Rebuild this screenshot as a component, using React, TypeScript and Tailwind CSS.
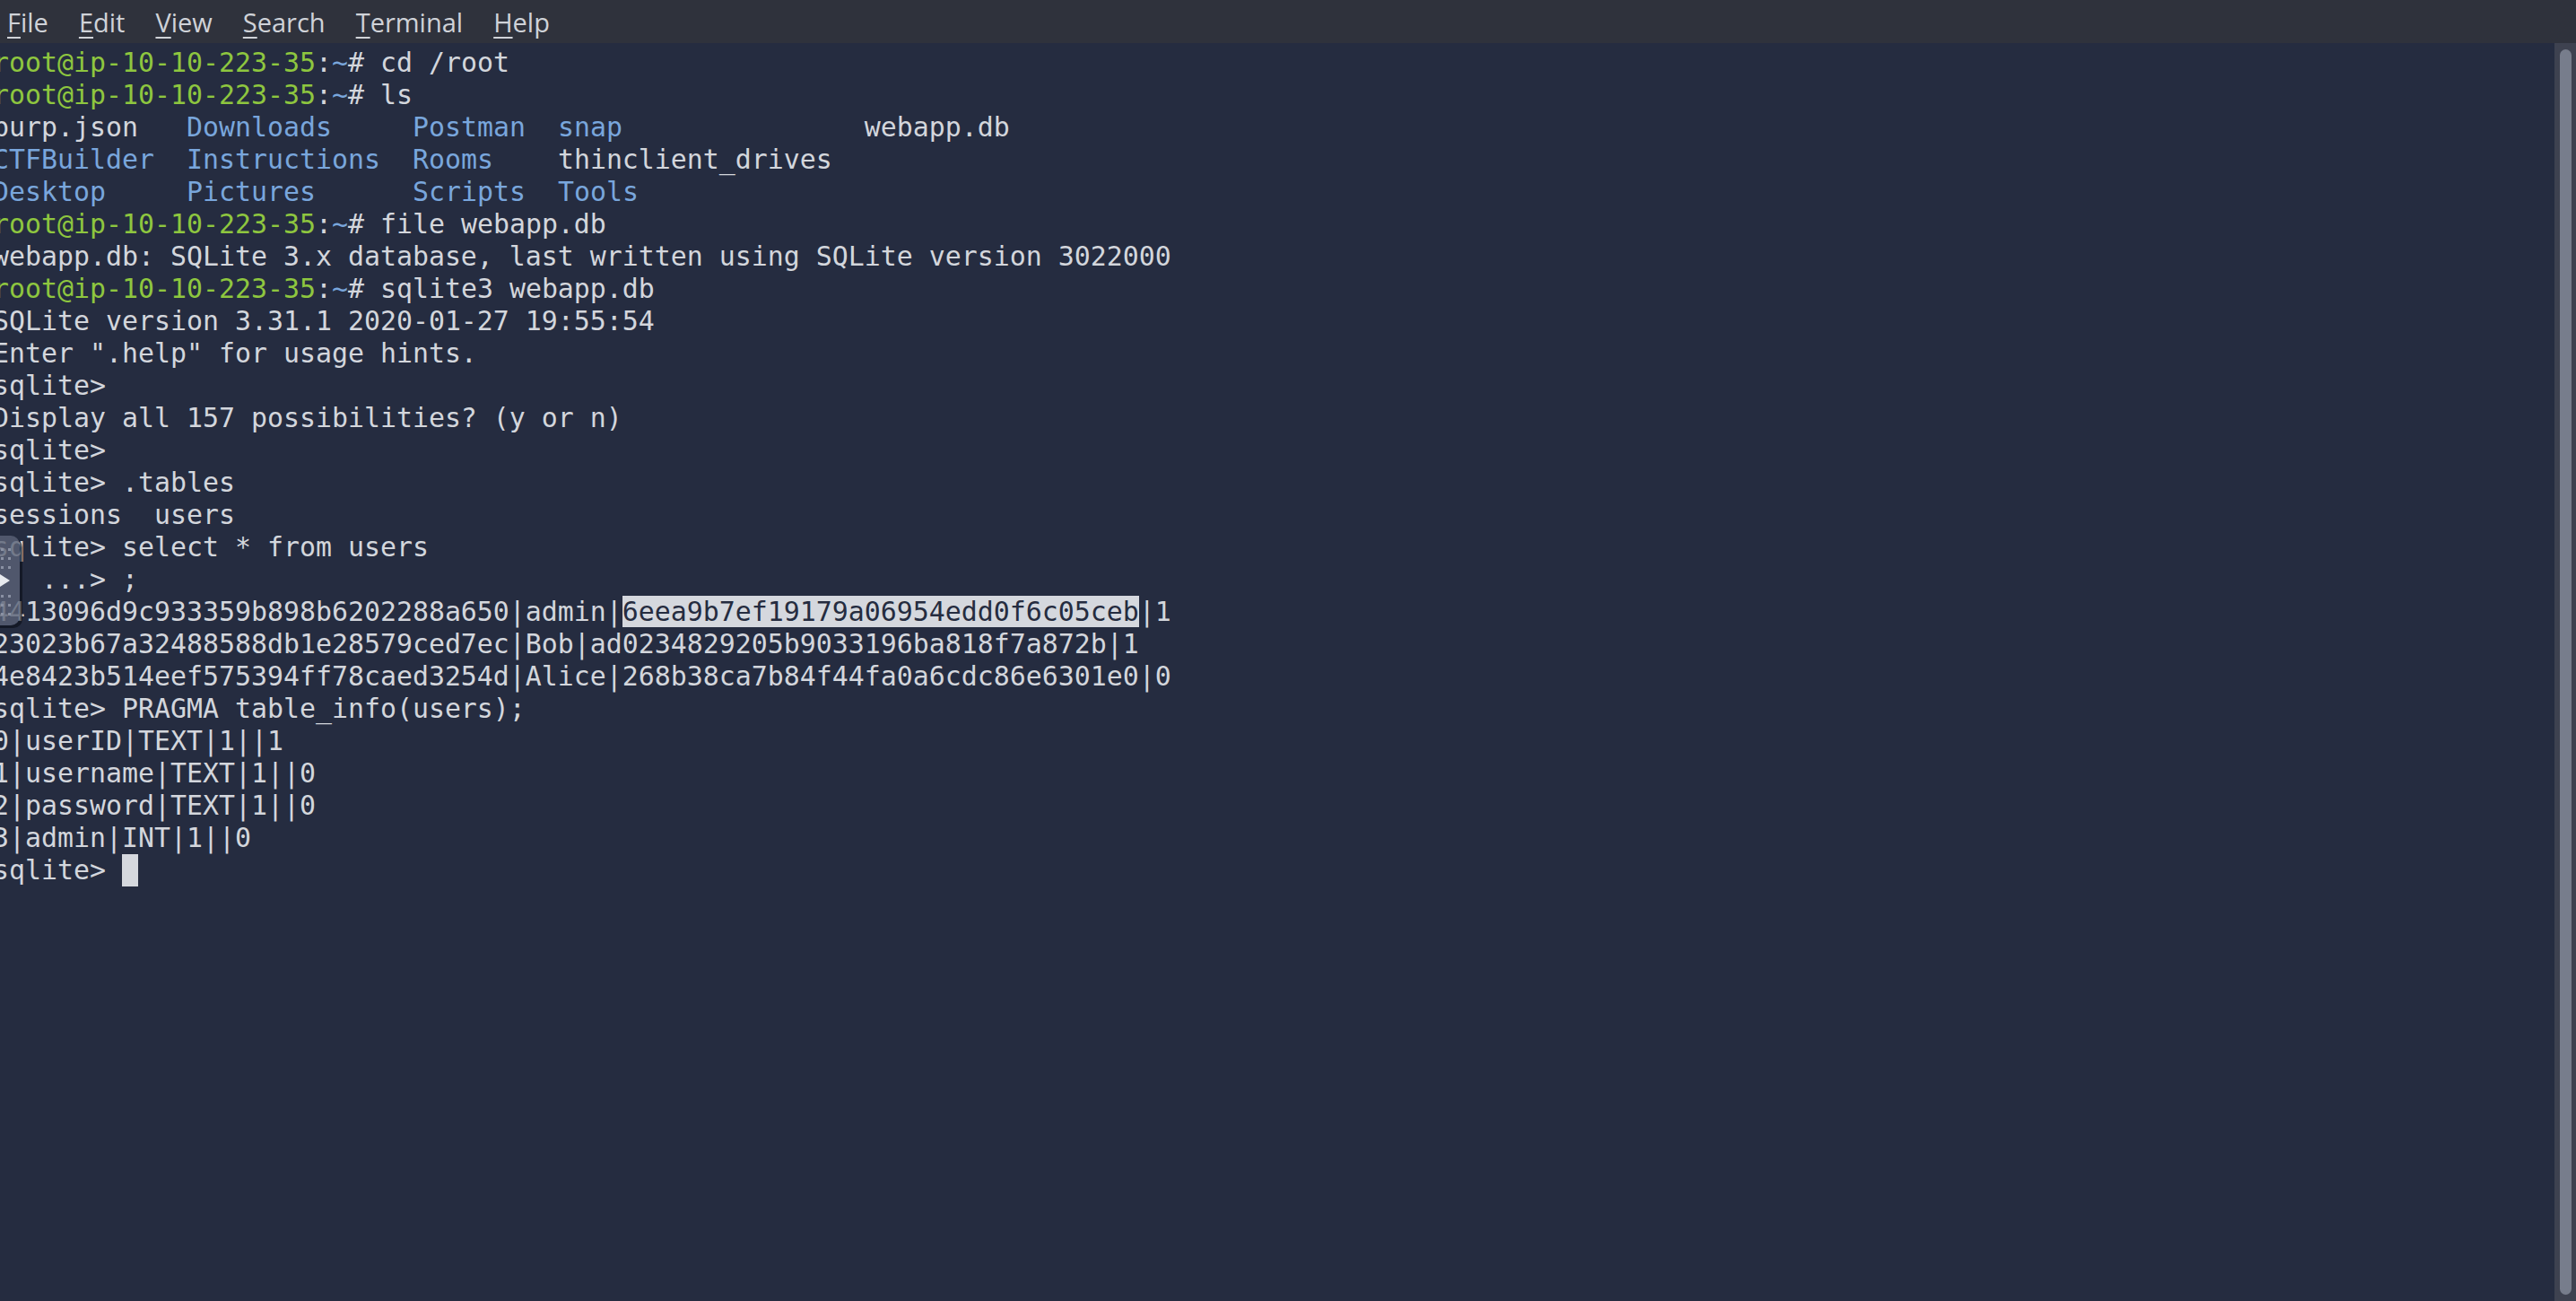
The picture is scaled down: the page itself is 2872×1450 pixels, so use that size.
import { FC, ReactNode } from "react";

const G = "text-[#8ec63f]";
const B = "text-[#79a6dc]";

const Prompt: FC<{ cmd: string }> = ({ cmd }) => (
  <>
    <span className={G}>root@ip-10-10-223-35</span>
    <span>:</span>
    <span className={B}>~</span>
    <span># {cmd}</span>
  </>
);

const lines: ReactNode[] = [
  <Prompt cmd="cd /root" />,
  <Prompt cmd="ls" />,
  <>
    {"burp.json   "}
    <span className={B}>Downloads</span>
    {"     "}
    <span className={B}>Postman</span>
    {"  "}
    <span className={B}>snap</span>
    {"               webapp.db"}
  </>,
  <>
    <span className={B}>CTFBuilder</span>
    {"  "}
    <span className={B}>Instructions</span>
    {"  "}
    <span className={B}>Rooms</span>
    {"    thinclient_drives"}
  </>,
  <>
    <span className={B}>Desktop</span>
    {"     "}
    <span className={B}>Pictures</span>
    {"      "}
    <span className={B}>Scripts</span>
    {"  "}
    <span className={B}>Tools</span>
  </>,
  <Prompt cmd="file webapp.db" />,
  "webapp.db: SQLite 3.x database, last written using SQLite version 3022000",
  <Prompt cmd="sqlite3 webapp.db" />,
  "SQLite version 3.31.1 2020-01-27 19:55:54",
  'Enter ".help" for usage hints.',
  "sqlite>",
  "Display all 157 possibilities? (y or n)",
  "sqlite>",
  "sqlite> .tables",
  "sessions  users",
  "sqlite> select * from users",
  "   ...> ;",
  <>
    {"4413096d9c933359b898b6202288a650|admin|"}
    <span className="bg-[#d5d8de] text-[#252c40]">6eea9b7ef19179a06954edd0f6c05ceb</span>
    {"|1"}
  </>,
  "23023b67a32488588db1e28579ced7ec|Bob|ad0234829205b9033196ba818f7a872b|1",
  "4e8423b514eef575394ff78caed3254d|Alice|268b38ca7b84f44fa0a6cdc86e6301e0|0",
  "sqlite> PRAGMA table_info(users);",
  "0|userID|TEXT|1||1",
  "1|username|TEXT|1||0",
  "2|password|TEXT|1||0",
  "3|admin|INT|1||0",
  <>
    {"sqlite> "}
    <span className="inline-block w-[18px] h-[36px] align-top bg-[#d5d8de]" />
  </>,
];

const menu = ["File", "Edit", "View", "Search", "Terminal", "Help"];

const App: FC = () => {
  return (
    <div className="relative w-[2872px] h-[1450px] overflow-hidden flex flex-col bg-[#252c40]">
      {/* Menu bar */}
      <div
        className="h-[48px] shrink-0 bg-[#2f323c] flex items-center gap-[34px] pl-[8px] text-[29px] text-[#cfd2d8]"
        style={{ fontFamily: '"Open Sans", "Noto Sans", sans-serif' }}
      >
        {menu.map((m) => (
          <span key={m} className="leading-none">
            <span className="underline underline-offset-[5px] decoration-[2px]">{m[0]}</span>
            {m.slice(1)}
          </span>
        ))}
      </div>

      <div className="flex flex-1 min-h-0">
        {/* Terminal output */}
        <div
          className="flex-1 pt-[4px] -ml-[8px] text-[29.9px] text-[#d3d6dc] whitespace-pre"
          style={{ fontFamily: '"DejaVu Sans Mono", "Liberation Mono", monospace' }}
        >
          {lines.map((l, i) => (
            <div key={i} className="h-[36px] leading-[36px]">
              {l}
            </div>
          ))}
        </div>

        {/* Scrollbar */}
        <div className="w-[24px] shrink-0 bg-[#3e4250] pt-[7px] pb-[7px] flex justify-center">
          <div className="w-[13px] h-full rounded-full bg-[#777d8c]" />
        </div>
      </div>

      {/* Side overlay widget */}
      <div className="absolute left-[-12px] top-[597px] w-[34px] h-[100px] rounded-[10px] bg-[#5b6377]/80 shadow-[3px_3px_0_rgba(10,14,24,0.6)]">
        <svg className="absolute left-[12px] top-[0px]" width="22" height="100" viewBox="0 0 22 100">
          {[14, 24, 34, 66, 76, 86].map((y) => (
            <g key={y} fill="#8a91a3">
              <rect x="1" y={y} width="3" height="3" />
              <rect x="9" y={y} width="3" height="3" />
            </g>
          ))}
          <path d="M0 43 L11 50 L0 57 Z" fill="#e8eaee" />
        </svg>
      </div>
    </div>
  );
};

export default App;
